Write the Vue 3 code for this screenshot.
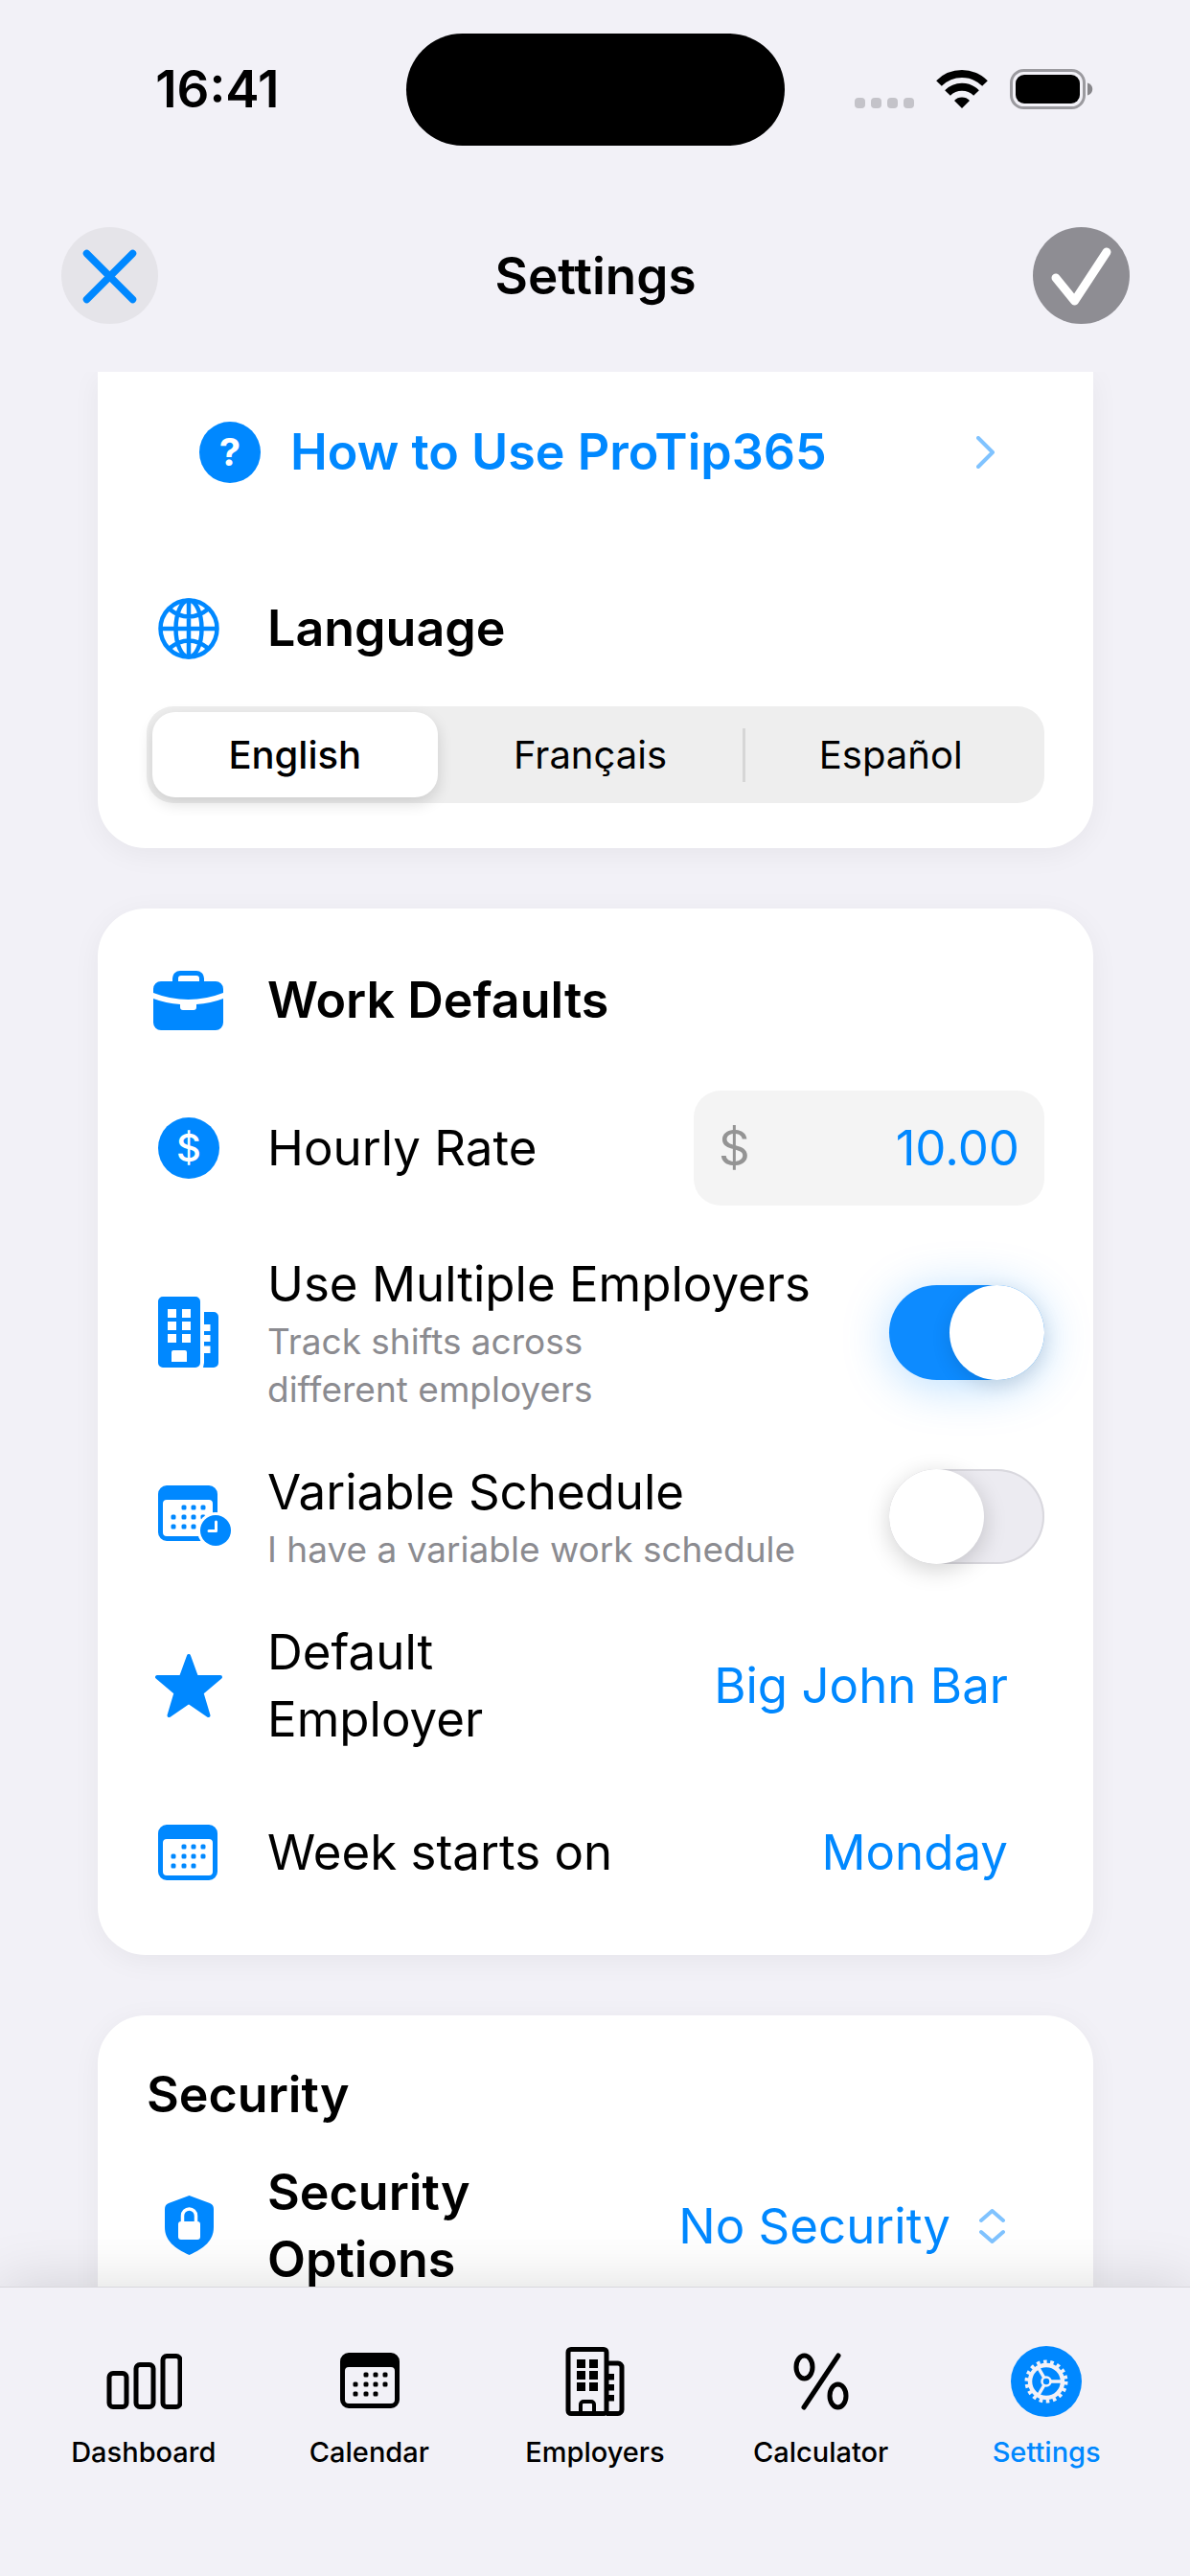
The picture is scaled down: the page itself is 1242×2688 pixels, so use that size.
<script setup>
import { ref } from 'vue'

const languages = ['English', 'Français', 'Español']
const language = ref('English')
const hourlyRate = ref('10.00')
const multipleEmployers = ref(true)
const variableSchedule = ref(false)
const defaultEmployer = ref('Big John Bar')
const weekStart = ref('Monday')
const security = ref('No Security')

const calendarDots = [
  [27, 23], [37, 23], [47, 23],
  [16, 33], [27, 33], [37, 33], [47, 33],
  [16, 43], [27, 43], [37, 43],
]
const tabs = [
  { id: 'dashboard', label: 'Dashboard' },
  { id: 'calendar', label: 'Calendar' },
  { id: 'employers', label: 'Employers' },
  { id: 'calculator', label: 'Calculator' },
  { id: 'settings', label: 'Settings' },
]
const activeTab = ref('settings')
</script>

<template>
  <div class="screen">
    <svg class="defs" aria-hidden="true">
      <symbol id="calendar-shape" viewBox="0 0 62 58">
        <path
          fill="currentColor"
          fill-rule="evenodd"
          d="M9 0H53a9 9 0 0 1 9 9V49a9 9 0 0 1-9 9H9a9 9 0 0 1-9-9V9a9 9 0 0 1 9-9zM9 15a4 4 0 0 0-4 4V49a4 4 0 0 0 4 4H53a4 4 0 0 0 4-4V19a4 4 0 0 0-4-4z"
        />
        <rect
          v-for="([x, y], i) in calendarDots"
          :key="i"
          :x="x - 2.5"
          :y="y - 2.5"
          width="5"
          height="5"
          rx="1.5"
          fill="currentColor"
        />
      </symbol>
    </svg>

    <div class="status-bar">
      <span class="clock">16:41</span>
      <span class="island"></span>
      <div class="indicators">
        <svg width="62" height="42" viewBox="0 0 62 42" fill="#c4c3c9" aria-hidden="true">
          <rect x="0" y="30" width="11" height="11" rx="4" />
          <rect x="17" y="30" width="11" height="11" rx="4" />
          <rect x="34" y="30" width="11" height="11" rx="4" />
          <rect x="51" y="30" width="11" height="11" rx="4" />
        </svg>
        <svg width="54" height="42" viewBox="0 0 54 42" aria-hidden="true">
          <g fill="none" stroke="#000" stroke-width="8">
            <path d="M3 15a34 34 0 0 1 48 0" />
            <path d="M12 25a21 21 0 0 1 30 0" />
          </g>
          <path d="M27 41l-8-8a11 11 0 0 1 16 0z" />
        </svg>
        <svg width="87" height="42" viewBox="0 0 87 42" aria-hidden="true">
          <rect x="1.5" y="1.5" width="76" height="39" rx="13" fill="none" stroke="#9b9a9f" stroke-width="3" />
          <rect x="6" y="6" width="67" height="30" rx="9" />
          <path d="M81 14.500c7 2 7 11 0 13z" fill="#88878b" />
        </svg>
      </div>
    </div>

    <header class="title-bar">
      <button class="round-button close" type="button" aria-label="Close">
        <svg width="101" height="101" viewBox="0 0 101 101" aria-hidden="true">
          <path d="M26.500 27.500l48 48M74.500 27.500l-48 48" fill="none" stroke="#08f" stroke-width="7.500" stroke-linecap="round" />
        </svg>
      </button>
      <h1>Settings</h1>
      <button class="round-button confirm" type="button" aria-label="Save">
        <svg width="101" height="101" viewBox="0 0 101 101" aria-hidden="true">
          <path d="M24 53L43.500 77L77 26" fill="none" stroke="#fff" stroke-width="9" stroke-linecap="round" stroke-linejoin="round" />
        </svg>
      </button>
    </header>

    <main class="scroll">
      <section class="card card-continued">
        <a class="help" href="#help">
          <span class="help-mark" aria-hidden="true">?</span>
          <span class="help-text">How to Use ProTip365</span>
          <svg width="20" height="34" viewBox="0 0 20 34" aria-hidden="true">
            <path d="M2 2L17 17L2 32" fill="none" stroke="#80c3ff" stroke-width="4" stroke-linecap="round" stroke-linejoin="round" />
          </svg>
        </a>

        <div class="row">
          <svg class="row-icon" viewBox="0 0 88 70" aria-hidden="true">
            <g fill="none" stroke="currentColor" stroke-width="4.500">
              <circle cx="44" cy="35" r="29.500" />
              <ellipse cx="44" cy="35" rx="13.500" ry="29.500" />
              <path d="M44 5V65M14 35H74M23 14Q44 31 65 14M23 56Q44 39 65 56" />
            </g>
          </svg>
          <h2 id="language-title">Language</h2>
        </div>

        <div class="segments" role="radiogroup" aria-labelledby="language-title">
          <label v-for="name in languages" :key="name" class="segment" :class="{ selected: language === name }">
            <input v-model="language" type="radio" name="language" :value="name" />
            {{ name }}
          </label>
        </div>
      </section>

      <section class="card">
        <div class="row row-title">
          <svg class="row-icon" viewBox="0 0 88 70" fill="currentColor" aria-hidden="true">
            <path fill-rule="evenodd" d="M7 27V23a8 8 0 0 1 8-8H27V12a8 8 0 0 1 8-8H52a8 8 0 0 1 8 8V15H72a8 8 0 0 1 8 8V27Q62 34 43.500 34Q25 34 7 27zM33 15H55V12a3 3 0 0 0-3-3H36a3 3 0 0 0-3 3z" />
            <path d="M7 33Q20 38 35 39V42a3 3 0 0 0 3 3H49a3 3 0 0 0 3-3V39Q67 38 80 33V58a8 8 0 0 1-8 8H15a8 8 0 0 1-8-8z" />
          </svg>
          <h2>Work Defaults</h2>
        </div>

        <div class="row">
          <span class="row-icon"><span class="coin" aria-hidden="true">$</span></span>
          <label class="label" for="rate">Hourly Rate</label>
          <div class="rate-field">
            <span class="currency">$</span>
            <input id="rate" v-model="hourlyRate" type="text" inputmode="decimal" />
          </div>
        </div>

        <div class="row">
          <svg class="row-icon" viewBox="0 0 88 70" fill="currentColor" aria-hidden="true">
            <path fill-rule="evenodd" d="M17-2H51a5 5 0 0 1 5 5V67a5 5 0 0 1-5 5H17a5 5 0 0 1-5-5V3a5 5 0 0 1 5-5zM22 11v9h9v-9zM37 11v9h9v-9zM22 24v9h9v-9zM37 24v9h9v-9zM22 37v9h9v-9zM37 37v9h9v-9zM26 56V66H42V56a2 2 0 0 0-2-2H28a2 2 0 0 0-2 2z" />
            <path d="M60 14H70a5 5 0 0 1 5 5V67a5 5 0 0 1-5 5H59l1-5V57h6.500v-7.500H60V45h6.500v-7H60V34h6.500v-7H60z" />
          </svg>
          <div class="text">
            <label class="label" for="multi">Use Multiple Employers</label>
            <p class="hint">Track shifts across<br />different employers</p>
          </div>
          <input id="multi" v-model="multipleEmployers" class="toggle" type="checkbox" role="switch" />
        </div>

        <div class="row">
          <svg class="row-icon" viewBox="0 0 88 70" aria-hidden="true">
            <use href="#calendar-shape" x="12" y="3" width="62" height="58" />
            <circle cx="72" cy="50" r="19" fill="#fff" />
            <circle cx="72" cy="50" r="16" fill="currentColor" />
            <path d="M72.500 41V50.500H65" fill="none" stroke="#fff" stroke-width="3" stroke-linecap="round" stroke-linejoin="round" />
          </svg>
          <div class="text">
            <label class="label" for="variable">Variable Schedule</label>
            <p class="hint">I have a variable work schedule</p>
          </div>
          <input id="variable" v-model="variableSchedule" class="toggle" type="checkbox" role="switch" />
        </div>

        <div class="row">
          <svg class="row-icon" viewBox="0 0 88 70" aria-hidden="true">
            <path d="M44 4L52 26H77L57.500 42.500L64.500 66L44 52L23.500 66L30.500 42.500L11 26H36z" fill="currentColor" stroke="currentColor" stroke-width="4" stroke-linejoin="round" />
          </svg>
          <label class="label" for="employer">Default<br />Employer</label>
          <select id="employer" v-model="defaultEmployer" class="picker">
            <option>Big John Bar</option>
          </select>
        </div>

        <div class="row row-last">
          <svg class="row-icon" viewBox="0 0 88 70" aria-hidden="true">
            <use href="#calendar-shape" x="12" y="6" width="62" height="58" />
          </svg>
          <label class="label" for="week">Week starts on</label>
          <select id="week" v-model="weekStart" class="picker">
            <option>Monday</option>
            <option>Sunday</option>
          </select>
        </div>
      </section>

      <section class="card card-security">
        <h2>Security</h2>
        <div class="row">
          <svg class="row-icon" viewBox="0 0 88 70" aria-hidden="true">
            <path d="M44.500 3L66 11Q70 12.500 70 17V36C70 50 60 58 44.500 65C29 58 19 50 19 36V17Q19 12.500 23 11z" fill="currentColor" />
            <rect x="33" y="30" width="23" height="19" rx="3" fill="#fff" />
            <path d="M37.500 31V24a7 7 0 0 1 14 0V31" fill="none" stroke="#fff" stroke-width="3.500" />
          </svg>
          <label class="label strong" for="security">Security<br />Options</label>
          <div class="picker-menu">
            <select id="security" v-model="security" class="picker">
              <option>No Security</option>
            </select>
            <svg width="27" height="36" viewBox="0 0 27 36" aria-hidden="true">
              <path d="M2 12L13.500 2L25 12M2 24L13.500 34L25 24" fill="none" stroke="#80c3ff" stroke-width="4" stroke-linecap="round" stroke-linejoin="round" />
            </svg>
          </div>
        </div>
      </section>
    </main>

    <nav class="tab-bar">
      <a v-for="tab in tabs" :key="tab.id" class="tab" :class="{ active: activeTab === tab.id }" :href="'#' + tab.id">
        <svg width="80" height="76" viewBox="0 0 80 76" aria-hidden="true">
          <g v-if="tab.id === 'dashboard'" fill="none" stroke="currentColor" stroke-width="5">
            <rect x="4" y="29.500" width="18" height="35" rx="4" />
            <rect x="32" y="20.500" width="18" height="44" rx="4" />
            <rect x="60" y="11.500" width="18" height="53" rx="4" />
          </g>
          <use v-else-if="tab.id === 'calendar'" href="#calendar-shape" x="10" y="8" width="62" height="58" />
          <g v-else-if="tab.id === 'employers'">
            <g fill="none" stroke="currentColor" stroke-width="5">
              <rect x="12" y="4.500" width="40" height="67" rx="3" />
              <path d="M25 72V62a3 3 0 0 1 3-3h8a3 3 0 0 1 3 3V72" stroke-width="4" />
              <path d="M52 19H64a4 4 0 0 1 4 4V67.500a4 4 0 0 1-4 4H52" />
            </g>
            <path fill="currentColor" d="M21 15h9v9h-9zM34 15h9v9h-9zM21 27h9v9h-9zM34 27h9v9h-9zM21 39h9v9h-9zM34 39h9v9h-9zM54 30h6v6.500h-6zM54 41h6v6.500h-6zM54 52h6v6.500h-6z" />
          </g>
          <g v-else-if="tab.id === 'calculator'" fill="none" stroke="currentColor" stroke-width="5" stroke-linecap="round">
            <ellipse cx="22.500" cy="23" rx="8.500" ry="12" />
            <ellipse cx="57.500" cy="53" rx="8.500" ry="12" />
            <path d="M58 11L22 65" />
          </g>
          <g v-else>
            <circle cx="40" cy="38" r="37" fill="currentColor" />
            <g fill="none" stroke="#f2f1f7">
              <circle cx="40" cy="38" r="17" stroke-width="4.500" />
              <circle cx="40" cy="38" r="20.500" stroke-width="4" stroke-dasharray="3.600 3.556" />
              <circle cx="40" cy="38" r="4.500" stroke-width="2.600" />
              <path d="M45 38H57M37.500 33.700L31.500 23.300M37.500 42.300L31.500 52.700" stroke-width="3.400" />
            </g>
          </g>
        </svg>
        <span>{{ tab.label }}</span>
      </a>
    </nav>
  </div>
</template>

<style>
body {
  background: #f2f1f7;
}
</style>

<style scoped>
.screen {
  display: flex;
  flex-direction: column;
  height: 100vh;
  overflow: hidden;
  background: #f2f1f7;
  color: #000;
  font-family: Inter, 'Liberation Sans', sans-serif;
  font-size: 51px;
  line-height: 70px;
}

.screen *,
.screen *::before {
  box-sizing: border-box;
}

.defs {
  position: absolute;
  width: 0;
  height: 0;
}

h1,
h2,
p {
  margin: 0;
}

h1,
.clock {
  font-size: 53px;
  font-weight: 600;
}

h2,
.strong,
.help {
  font-size: 52px;
  font-weight: 600;
}

input,
select,
button {
  margin: 0;
  padding: 0;
  border: 0;
  background: none;
  color: inherit;
  font: inherit;
}

svg {
  display: block;
  flex: none;
}

/* Status bar */
.status-bar {
  display: grid;
  grid-template-columns: 1fr auto 1fr;
  align-items: center;
  flex: none;
  height: 187px;
}

.clock {
  justify-self: center;
  padding: 0 0 2px 30px;
}

.island {
  width: 395px;
  height: 117px;
  border-radius: 59px;
  background: #000;
}

.indicators {
  display: flex;
  justify-content: flex-end;
  gap: 23px;
  padding: 0 101px 2px 0;
}

/* Title bar */
.title-bar {
  display: flex;
  align-items: center;
  justify-content: space-between;
  flex: none;
  height: 201px;
  padding: 0 63px 0 64px;
}

.round-button {
  border-radius: 50%;
}

.close {
  background: #e5e4e9;
}

.confirm {
  background: #8e8d93;
}

/* Cards */
.scroll {
  display: flex;
  flex: 1;
  flex-direction: column;
  gap: 63px;
  min-height: 0;
  padding: 0 101px 0 102px;
  overflow: hidden;
}

.card {
  display: flex;
  flex: none;
  flex-direction: column;
  gap: 47px;
  padding: 61px 51px 50px;
  border-radius: 50px;
  background: #fff;
  box-shadow: 0 6px 30px rgba(0, 0, 0, 0.05);
}

.card-continued {
  gap: 46px;
  padding-top: 49px;
  padding-bottom: 47px;
  border-radius: 0 0 50px 50px;
}

.card-security {
  gap: 32px;
  padding-top: 48px;
}

.row {
  display: flex;
  align-items: center;
  gap: 38px;
}

.row-title {
  margin-bottom: 12px;
}

.row-last {
  min-height: 114px;
}

.row-icon {
  display: flex;
  flex: none;
  align-items: center;
  justify-content: center;
  width: 88px;
  height: 70px;
  overflow: visible;
  color: #08f;
}

.text,
.label {
  flex: 1;
}

.text {
  display: flex;
  flex-direction: column;
}

.hint {
  color: #8b8b90;
  font-size: 37px;
  line-height: 50px;
}

.help {
  display: flex;
  align-items: center;
  gap: 31px;
  margin-bottom: 68px;
  padding: 0 51px 0 55px;
  color: #08f;
  text-decoration: none;
}

.help-text {
  flex: 1;
}

.help-mark,
.coin {
  display: flex;
  align-items: center;
  justify-content: center;
  width: 64px;
  height: 64px;
  border-radius: 50%;
  background: #08f;
  color: #fff;
  font-size: 40px;
  font-weight: 500;
}

.help-mark {
  font-weight: 700;
}

/* Language control */
.segments {
  display: flex;
  height: 101px;
  padding: 6px;
  border-radius: 28px;
  background: #eee;
}

.segment {
  position: relative;
  display: flex;
  flex: 1 1 auto;
  align-items: center;
  justify-content: center;
  border-radius: 24px;
  font-size: 40px;
}

.segment input {
  position: absolute;
  opacity: 0;
}

.segment.selected {
  background: #fff;
  box-shadow: 0 6px 16px rgba(0, 0, 0, 0.14);
  font-weight: 500;
}

.segment:last-child::before {
  position: absolute;
  left: 0;
  width: 3px;
  height: 56px;
  background: #d6d6d6;
  content: '';
}

/* Hourly rate */
.rate-field {
  display: flex;
  align-items: center;
  justify-content: space-between;
  width: 366px;
  height: 120px;
  padding: 0 26px;
  border-radius: 28px;
  background: #f4f4f4;
}

.currency {
  color: #949494;
}

.rate-field input {
  width: 200px;
  color: #08f;
  text-align: right;
}

/* Switches */
.toggle {
  display: flex;
  flex: none;
  width: 162px;
  height: 99px;
  border-radius: 50px;
  background: #ecebf1;
  box-shadow: inset 0 0 0 2px #d9d8de;
  appearance: none;
}

.toggle::before {
  width: 99px;
  height: 99px;
  border-radius: 50%;
  background: #fff;
  box-shadow: 0 6px 24px rgba(0, 0, 0, 0.18);
  content: '';
}

.toggle:checked {
  justify-content: flex-end;
  background: #0d8bff;
  box-shadow: 0 6px 50px rgba(0, 136, 255, 0.28);
}

.toggle:checked::before {
  box-shadow: 0 6px 20px rgba(0, 0, 0, 0.12);
}

/* Pickers */
.picker {
  flex: none;
  margin-right: 38px;
  color: #08f;
  text-align: right;
  text-align-last: right;
  appearance: none;
}

.picker-menu {
  display: flex;
  align-items: center;
  gap: 30px;
  margin-right: 41px;
}

.picker-menu .picker {
  margin-right: 0;
}

/* Tab bar */
.tab-bar {
  position: relative;
  display: flex;
  flex: none;
  padding: 60px 32px 111px;
  border-top: 1px solid #d9d8dd;
  background: #f2f1f7;
  box-shadow: 0 0 60px rgba(0, 0, 0, 0.14);
}

.tab {
  display: flex;
  flex: 1;
  flex-direction: column;
  align-items: center;
  gap: 18px;
  color: #000;
  font-size: 29px;
  font-weight: 500;
  line-height: 36px;
  text-decoration: none;
}

.tab.active {
  color: #08f;
}
</style>
